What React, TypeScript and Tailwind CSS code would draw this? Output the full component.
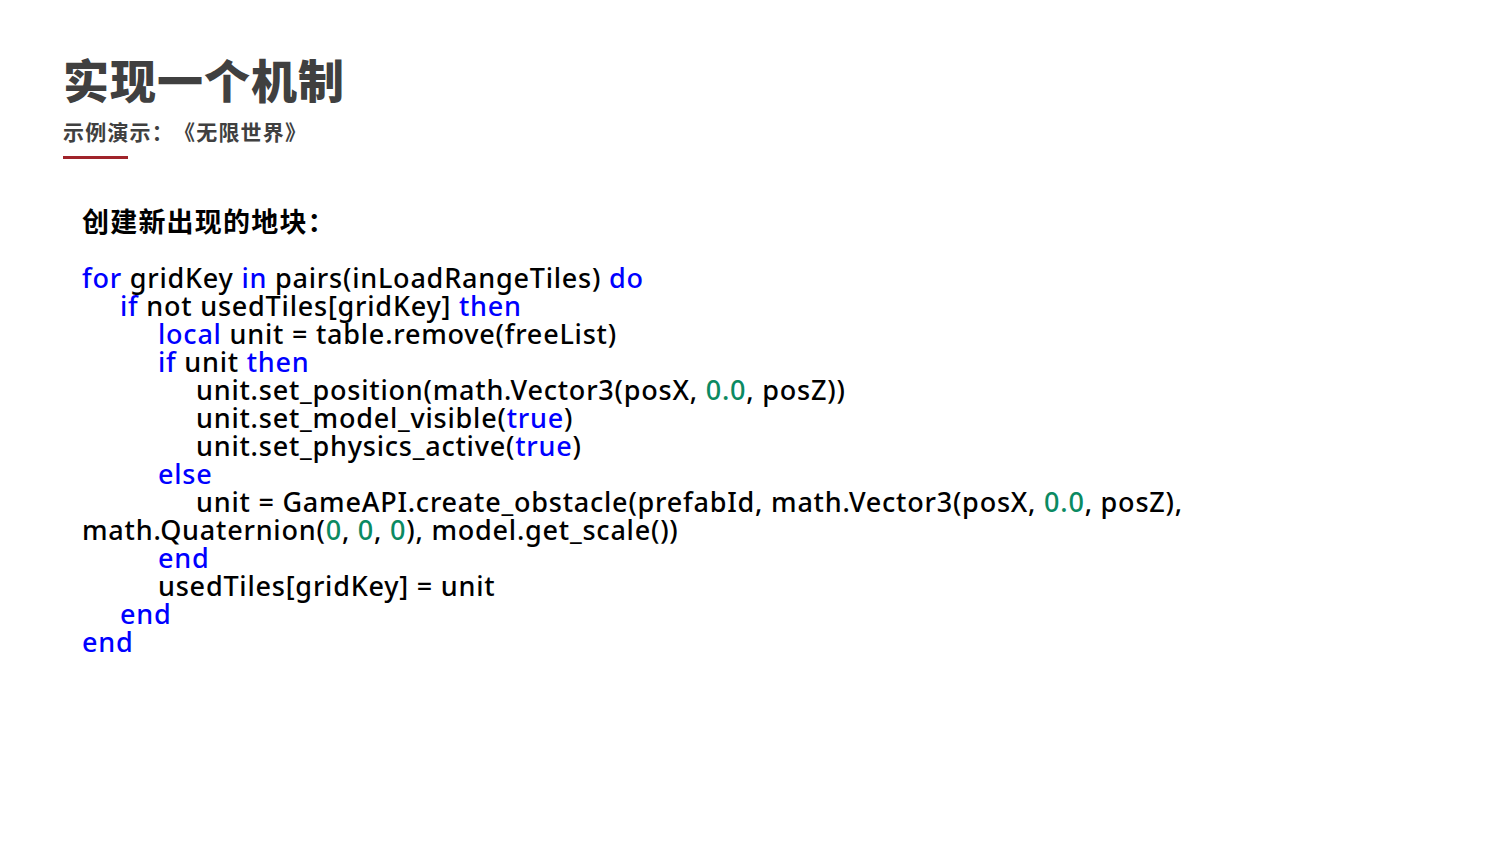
import React from "react";

const K = ({ children }: { children: React.ReactNode }) => (
  <span className="text-[#0000ff]">{children}</span>
);
const N = ({ children }: { children: React.ReactNode }) => (
  <span className="text-[#0b8a62]">{children}</span>
);

const Line = ({ indent = 0, children }: { indent?: number; children: React.ReactNode }) => {
  const pad = ["pl-0", "pl-[38px]", "pl-[76px]", "pl-[114px]"][indent];
  return <div className={`${pad} h-[28px] leading-[28px] whitespace-nowrap`}>{children}</div>;
};

export default function App() {
  return (
    <div className="w-[1500px] h-[844px] bg-white relative overflow-hidden">
      <div className="pl-[63px] pt-[48px] [text-spacing-trim:space-all]">
        <h1 className="text-[46px] leading-[60px] font-black text-[#404040] tracking-[1px] [font-family:'Noto_Sans_CJK_SC',sans-serif]">
          实现一个机制
        </h1>
        <div className="mt-[10px] text-[21px] leading-[26px] font-bold tracking-[1.2px] text-[#404040] [font-family:'Noto_Sans_CJK_SC',sans-serif]">
          示例演示：《无限世界》
        </div>
        <div className="mt-[12px] w-[65px] h-[3px] bg-[#a0232a]" />
      </div>
      <div className="pl-[82px] pt-[45px]">
        <div className="text-[27px] leading-[34px] font-bold tracking-[1.2px] text-black [font-family:'Noto_Sans_CJK_SC',sans-serif] [text-spacing-trim:space-all]">
          创建新出现的地块：
        </div>
        <div className="mt-[26px] text-[27px] tracking-[0.78px] text-black [font-family:'Noto_Sans',sans-serif] font-medium">
          <Line>
            <K>for</K> gridKey <K>in</K> pairs(inLoadRangeTiles) <K>do</K>
          </Line>
          <Line indent={1}>
            <K>if</K> not usedTiles[gridKey] <K>then</K>
          </Line>
          <Line indent={2}>
            <K>local</K> unit = table.remove(freeList)
          </Line>
          <Line indent={2}>
            <K>if</K> unit <K>then</K>
          </Line>
          <Line indent={3}>
            unit.set_position(math.Vector3(posX, <N>0.0</N>, posZ))
          </Line>
          <Line indent={3}>
            unit.set_model_visible(<K>true</K>)
          </Line>
          <Line indent={3}>
            unit.set_physics_active(<K>true</K>)
          </Line>
          <Line indent={2}>
            <K>else</K>
          </Line>
          <Line indent={3}>
            unit = GameAPI.create_obstacle(prefabId, math.Vector3(posX, <N>0.0</N>, posZ),
          </Line>
          <Line>
            math.Quaternion(<N>0</N>, <N>0</N>, <N>0</N>), model.get_scale())
          </Line>
          <Line indent={2}>
            <K>end</K>
          </Line>
          <Line indent={2}>usedTiles[gridKey] = unit</Line>
          <Line indent={1}>
            <K>end</K>
          </Line>
          <Line>
            <K>end</K>
          </Line>
        </div>
      </div>
    </div>
  );
}
